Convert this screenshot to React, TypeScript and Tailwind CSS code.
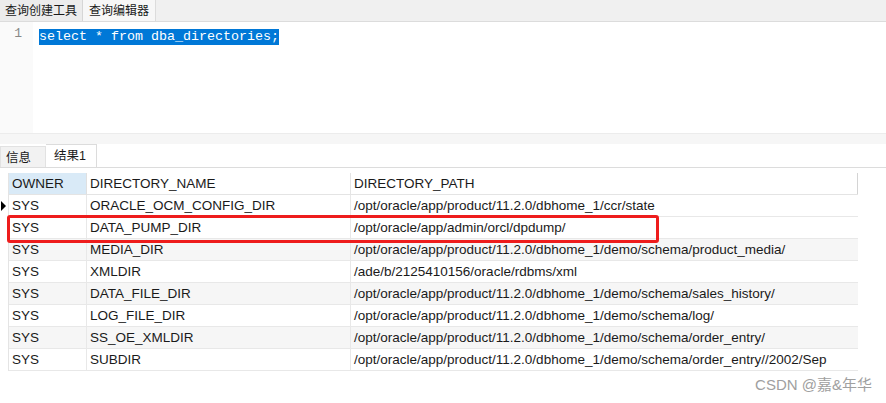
import React from "react";

const rows = [
  ["SYS", "ORACLE_OCM_CONFIG_DIR", "/opt/oracle/app/product/11.2.0/dbhome_1/ccr/state"],
  ["SYS", "DATA_PUMP_DIR", "/opt/oracle/app/admin/orcl/dpdump/"],
  ["SYS", "MEDIA_DIR", "/opt/oracle/app/product/11.2.0/dbhome_1/demo/schema/product_media/"],
  ["SYS", "XMLDIR", "/ade/b/2125410156/oracle/rdbms/xml"],
  ["SYS", "DATA_FILE_DIR", "/opt/oracle/app/product/11.2.0/dbhome_1/demo/schema/sales_history/"],
  ["SYS", "LOG_FILE_DIR", "/opt/oracle/app/product/11.2.0/dbhome_1/demo/schema/log/"],
  ["SYS", "SS_OE_XMLDIR", "/opt/oracle/app/product/11.2.0/dbhome_1/demo/schema/order_entry/"],
  ["SYS", "SUBDIR", "/opt/oracle/app/product/11.2.0/dbhome_1/demo/schema/order_entry//2002/Sep"],
];

const ui = { fontFamily: '"Liberation Sans", "Noto Sans CJK SC", sans-serif' };
const mono = { fontFamily: '"Liberation Mono", monospace' };

export default function App() {
  return (
    <div className="relative w-[886px] h-[403px] bg-white overflow-hidden text-[13.5px] text-[#1a1a1a]" style={ui}>
      {/* top tabs */}
      <div className="flex h-[22px] bg-[#f0f0f0] border-b border-[#dcdcdc] text-[12px]">
        <div className="px-[5px] flex items-center border-r border-[#d6d6d6] bg-[#ececec]">查询创建工具</div>
        <div className="px-[6px] flex items-center bg-[#f7f7f7] border-r border-[#dcdcdc]">查询编辑器</div>
      </div>

      {/* editor */}
      <div className="flex h-[111px]">
        <div className="w-[33px] bg-[#fafafa] text-[#888] text-right pr-[11px] pt-[4px] text-[13px] leading-[16px]" style={mono}>1</div>
        <div className="pl-[6px] pt-[4px]">
          <span className="bg-[#0078d7] text-white text-[13.33px] leading-[16px] inline-block whitespace-pre" style={mono}>select * from dba_directories;</span>
        </div>
      </div>

      {/* splitter */}
      <div className="h-[11px] bg-[#f6f6f6] border-t border-[#ececec]" />

      {/* result tabs */}
      <div className="flex h-[24px] border-b border-[#dcdcdc] bg-white text-[12.5px]">
        <div className="w-[46px] pl-[5px] pt-[2px] flex items-center bg-[#f2f2f2] border border-b-0 border-[#e2e2e2] mt-[2px]">信息</div>
        <div className="w-[51px] pl-[8px] pt-[1px] flex items-center bg-white border border-b-0 border-l-0 border-[#dcdcdc]">结果1</div>
      </div>

      {/* table */}
      <div className="mt-[5px] w-[858px] grid grid-cols-[9px_78px_264px_507px] border-r border-[#d4d4d4]">
        <div className="h-[22px] border-r border-[#e4e4e4]" />
        <div className="h-[22px] bg-[#d9eaf7] pl-[3px] pt-[2px] flex items-center border-r border-[#e0e0e0] border-b border-b-[#e4e4e4]">OWNER</div>
        <div className="h-[22px] pl-[3px] pt-[2px] flex items-center border-r border-[#e4e4e4] border-b">DIRECTORY_NAME</div>
        <div className="h-[22px] pl-[3px] pt-[2px] flex items-center border-b border-[#e4e4e4]">DIRECTORY_PATH</div>
        {rows.map((r, i) => {
          const bg = i % 2 === 0 && i > 0 ? "bg-[#f6f6f6]" : "bg-white";
          return (
            <React.Fragment key={i}>
              <div className="h-[22px] border-r border-[#e4e4e4] flex items-center">
                {i === 0 && (
                  <svg width="7" height="10" viewBox="0 0 7 10"><path d="M1 0 L6 5 L1 10 Z" fill="#000" /></svg>
                )}
              </div>
              <div className={`h-[22px] pl-[3px] pt-[2px] flex items-center border-r border-b border-[#e8e8e8] ${bg}`}>{r[0]}</div>
              <div className={`h-[22px] pl-[3px] pt-[2px] flex items-center border-r border-b border-[#e8e8e8] ${bg}`}>{r[1]}</div>
              <div className={`h-[22px] pl-[3px] pt-[2px] flex items-center border-b border-[#e8e8e8] ${bg}`}>{r[2]}</div>
            </React.Fragment>
          );
        })}
      </div>

      {/* highlight box */}
      <div className="absolute left-[7px] top-[215px] w-[652px] h-[28px] border-[3px] border-[#ee1c1c] rounded-[3px]" />

      {/* watermark */}
      <div className="absolute right-[14px] bottom-[7px] text-[15px] text-[#a0a0a0]" style={ui}>CSDN @嘉&amp;年华</div>
    </div>
  );
}
